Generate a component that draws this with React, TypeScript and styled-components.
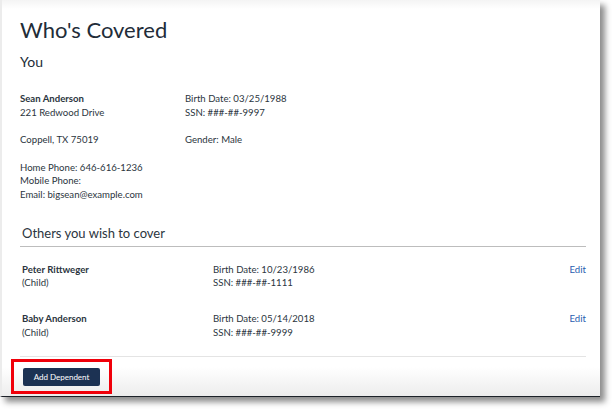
import React from 'react';
import styled, { createGlobalStyle } from 'styled-components';

const GlobalStyle = createGlobalStyle`
  html, body {
    margin: 0;
    padding: 0;
    background: #ffffff;
  }
  body {
    font-family: Lato, "Open Sans", sans-serif;
    color: #2b3540;
  }
`;

type Dependent = {
  name: string;
  relation: string;
  birth: string;
  ssn: string;
};

const dependents: Dependent[] = [
  { name: 'Peter Rittweger', relation: '(Child)', birth: '10/23/1986', ssn: '###-##-1111' },
  { name: 'Baby Anderson', relation: '(Child)', birth: '05/14/2018', ssn: '###-##-9999' },
];

const App = () => {
  return (
    <>
      <GlobalStyle />
      <Stage>
        <Panel>
          <Content>
            <Title>Who's Covered</Title>
            <SubTitle>You</SubTitle>

            <YouGrid>
              <Block>
                <Line $bold>Sean Anderson</Line>
                <Line>221 Redwood Drive</Line>
                <Line>&nbsp;</Line>
                <Line>Coppell, TX 75019</Line>
                <Line>&nbsp;</Line>
                <Line>Home Phone: 646-616-1236</Line>
                <Line>Mobile Phone:</Line>
                <Line>Email: bigsean@example.com</Line>
              </Block>
              <Block>
                <Line>Birth Date: 03/25/1988</Line>
                <Line>SSN: ###-##-9997</Line>
                <Line>&nbsp;</Line>
                <Line>Gender: Male</Line>
              </Block>
            </YouGrid>

            <SectionTitle>Others you wish to cover</SectionTitle>

            <DependentList>
              {dependents.map((d) => (
                <DependentRow key={d.name}>
                  <Block>
                    <Line $bold>{d.name}</Line>
                    <Line>{d.relation}</Line>
                  </Block>
                  <Block>
                    <Line>Birth Date: {d.birth}</Line>
                    <Line>SSN: {d.ssn}</Line>
                  </Block>
                  <EditLink href="#">Edit</EditLink>
                </DependentRow>
              ))}
            </DependentList>
          </Content>

          <Footer>
            <Highlight>
              <AddButton type="button">Add Dependent</AddButton>
            </Highlight>
          </Footer>
        </Panel>
      </Stage>
    </>
  );
};

export default App;

const Stage = styled.div`
  width: 616px;
  height: 414px;
  overflow: hidden;
`;

const Panel = styled.div`
  width: 600px;
  height: 397px;
  box-sizing: border-box;
  display: flex;
  flex-direction: column;
  background: linear-gradient(#f4f4f4 0px, #ffffff 9px);
  border-left: 2px solid #ececec;
  border-bottom: 1px solid #1d2229;
  box-shadow: 5px 5px 6px rgba(0, 0, 0, 0.45);
`;

const Content = styled.div`
  flex: 1;
  padding: 17px 14px 0 18px;
`;

const Title = styled.h1`
  margin: 0;
  font-size: 22px;
  line-height: 26px;
  font-weight: 400;
  color: #222c38;
`;

const SubTitle = styled.h2`
  margin: 10px 0 0;
  font-size: 14px;
  line-height: 18px;
  font-weight: 400;
  color: #222c38;
`;

const YouGrid = styled.div`
  display: grid;
  grid-template-columns: 165px 1fr;
  margin-top: 21px;
`;

const Block = styled.div`
  display: flex;
  flex-direction: column;
`;

const Line = styled.div<{ $bold?: boolean }>`
  font-size: 9.6px;
  line-height: 13.7px;
  font-weight: ${({ $bold }) => ($bold ? 700 : 400)};
  color: #2b3540;
  white-space: nowrap;
`;

const SectionTitle = styled.h3`
  margin: 23px 0 0;
  padding: 0 0 5px 2px;
  font-size: 13px;
  line-height: 16px;
  font-weight: 400;
  color: #2b3540;
  border-bottom: 1px solid #bdbdbd;
`;

const DependentList = styled.div`
  display: flex;
  flex-direction: column;
  gap: 22px;
  padding: 16px 0 17px;
  border-bottom: 1px solid #e4e4e4;
`;

const DependentRow = styled.div`
  display: grid;
  grid-template-columns: 191px 1fr auto;
  align-items: start;
  padding-left: 2px;
`;

const EditLink = styled.a`
  font-size: 9.6px;
  line-height: 13.7px;
  color: #2a5db0;
  text-decoration: none;
`;

const Footer = styled.div`
  height: 40px;
  padding: 2px 0 0 9px;
  box-sizing: border-box;
  background: linear-gradient(#ffffff 0px, #ffffff 10px, #ececec 40px);
`;

const Highlight = styled.div`
  width: 101px;
  height: 35px;
  box-sizing: border-box;
  border: 3px solid #f0000a;
  display: flex;
  align-items: center;
  padding-left: 9px;
`;

const AddButton = styled.button`
  width: 77px;
  height: 18px;
  padding: 0;
  border: none;
  border-radius: 2px;
  background: #1c3253;
  color: #ffffff;
  font-family: Lato, sans-serif;
  font-size: 8px;
  line-height: 18px;
  cursor: pointer;
`;
